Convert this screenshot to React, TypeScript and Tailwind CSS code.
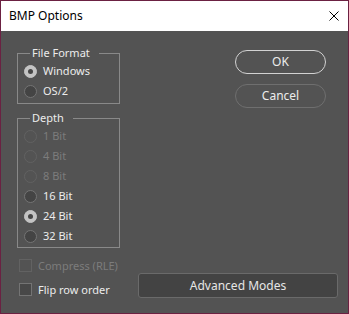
import React from "react";

const font = { fontFamily: '"Noto Sans", "Open Sans", sans-serif' };

function Radio({ label, checked = false, disabled = false }: { label: string; checked?: boolean; disabled?: boolean }) {
  return (
    <div className="flex h-[20px] items-center">
      <div
        className={
          "ml-[6px] flex h-[13px] w-[13px] items-center justify-center rounded-full border " +
          (checked
            ? "border-[#c4c4c4] bg-[#c4c4c4]"
            : disabled
            ? "border-[#626262] bg-[#535353]"
            : "border-[#747474] bg-[#444444]")
        }
      >
        {checked && <div className="h-[5px] w-[5px] rounded-full bg-[#464646]" />}
      </div>
      <span className={"ml-[6px] text-[11px] leading-[14px] " + (disabled ? "text-[#7c7c7c]" : "text-[#ececec]")}>{label}</span>
    </div>
  );
}

function Group({ title, height, children }: { title: string; height: string; children: React.ReactNode }) {
  return (
    <div className={"relative w-[103px] border border-[#898989] pt-[7px] " + height}>
      <span className="absolute left-[12px] top-[-9px] bg-[#535353] pl-[2px] pr-[9px] text-[11px] leading-[16px] text-[#ececec]">
        {title}
      </span>
      {children}
    </div>
  );
}

function Check({ label, disabled = false }: { label: string; disabled?: boolean }) {
  return (
    <div className="flex h-[13px] items-center">
      <div
        className={
          "h-[13px] w-[13px] border " + (disabled ? "border-[#626262] bg-[#535353]" : "border-[#747474] bg-[#484848]")
        }
      />
      <span className={"ml-[6px] text-[11px] leading-[14px] " + (disabled ? "text-[#7c7c7c]" : "text-[#ececec]")}>{label}</span>
    </div>
  );
}

export default function App() {
  return (
    <div style={font} className="flex h-[314px] w-[349px] flex-col border border-[#6b2142] bg-[#535353]">
      <div className="flex h-[30px] items-center justify-between bg-white pl-[8px] pr-[9px]">
        <span className="text-[12px] text-black">BMP Options</span>
        <svg width="10" height="10" viewBox="0 0 10 10">
          <path d="M0.5 0.5 L9.5 9.5 M9.5 0.5 L0.5 9.5" stroke="#000" strokeWidth="1" />
        </svg>
      </div>
      <div className="flex flex-1 flex-col pl-[16px] pr-[10px]">
        <div className="flex">
          <div className="flex flex-col pt-[22px]">
            <Group title="File Format" height="h-[51px]">
              <Radio label="Windows" checked />
              <Radio label="OS/2" />
            </Group>
            <div className="mt-[14px]">
              <Group title="Depth" height="h-[130px]">
                <Radio label="1 Bit" disabled />
                <Radio label="4 Bit" disabled />
                <Radio label="8 Bit" disabled />
                <Radio label="16 Bit" />
                <Radio label="24 Bit" checked />
                <Radio label="32 Bit" />
              </Group>
            </div>
          </div>
          <div className="ml-[115px] flex flex-col pt-[19px]">
            <button className="flex h-[24px] w-[91px] items-center justify-center rounded-full border-[1.5px] border-[#d2d2d2] text-[12px] text-[#ececec]">
              OK
            </button>
            <button className="mt-[10px] flex h-[24px] w-[91px] items-center justify-center rounded-full border border-[#6f6f6f] text-[12px] text-[#ececec]">
              Cancel
            </button>
          </div>
        </div>
        <div className="mt-[11px] flex">
          <div className="flex flex-col gap-[11px] pl-[2px]">
            <Check label="Compress (RLE)" disabled />
            <Check label="Flip row order" />
          </div>
          <button className="ml-auto mt-[14px] flex h-[25px] w-[200px] items-center justify-center rounded-[3px] border border-[#6a6a6a] bg-[#434343] text-[12px] text-[#e6e6e6]">
            Advanced Modes
          </button>
        </div>
      </div>
    </div>
  );
}
